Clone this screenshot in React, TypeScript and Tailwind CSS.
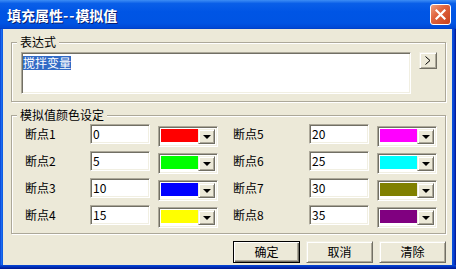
const raised =
  "border border-t-[#f1efe2] border-l-[#f1efe2] border-r-[#716f64] border-b-[#716f64] shadow-[inset_1px_1px_0_#fff,inset_-1px_-1px_0_#aca899] bg-[#ece9d8]";
const sunken =
  "border border-t-[#aca899] border-l-[#aca899] border-b-white border-r-white shadow-[inset_1px_1px_0_#716f64,inset_-1px_-1px_0_#f1efe2] bg-white";
const etched =
  "relative border border-[#aca899] shadow-[inset_1px_1px_0_#fff,1px_1px_0_#fff]";

type Point = { name: string; value: string; color: string };

const left: Point[] = [
  { name: "断点1", value: "0", color: "#ff0000" },
  { name: "断点2", value: "5", color: "#00ff00" },
  { name: "断点3", value: "10", color: "#0000ff" },
  { name: "断点4", value: "15", color: "#ffff00" },
];
const right: Point[] = [
  { name: "断点5", value: "20", color: "#ff00ff" },
  { name: "断点6", value: "25", color: "#00ffff" },
  { name: "断点7", value: "30", color: "#808000" },
  { name: "断点8", value: "35", color: "#800080" },
];

function ColorCombo({ color }: { color: string }) {
  return (
    <div className={`mt-[2px] flex h-[21px] w-[60px] p-[2px] ${sunken}`}>
      <div className="flex-1 pb-[2px]">
        <div className="h-full w-full" style={{ background: color }} />
      </div>
      <div className={`flex w-[17px] items-center justify-center ${raised}`}>
        <div className="mt-[1px] h-0 w-0 border-x-[4px] border-t-[4px] border-x-transparent border-t-black" />
      </div>
    </div>
  );
}

function Row({ p, labelW }: { p: Point; labelW: string }) {
  return (
    <div className="flex h-[20px] items-start">
      <div className={`flex h-[20px] items-center ${labelW}`}>{p.name}</div>
      <div className={`flex h-[20px] w-[60px] items-center pl-[2px] ${sunken}`}>{p.value}</div>
      <div className="w-[8px]" />
      <ColorCombo color={p.color} />
    </div>
  );
}

function Button({ label, primary = false }: { label: string; primary?: boolean }) {
  const cls = primary
    ? "border border-black bg-[#ece9d8] shadow-[inset_1px_1px_0_#fff,inset_-1px_-1px_0_#716f64,inset_-2px_-2px_0_#aca899]"
    : raised;
  return (
    <div className={`flex h-[22px] w-[67px] items-center justify-center text-[12px] ${cls}`}>{label}</div>
  );
}

export default function App() {
  return (
    <div className="flex h-[269px] w-[456px] flex-col bg-[#0054e3] font-['Noto_Sans_CJK_SC',sans-serif] text-[12px] text-black">
      {/* title bar */}
      <div className="flex h-[29px] items-center bg-[linear-gradient(to_bottom,#3d8df5_0%,#0a5fe8_12%,#0055e5_40%,#0054e3_80%,#0049d6_95%,#003ec4_100%)] pl-[7px] pr-[5px]">
        <div className="flex-1 text-[14px] font-bold leading-none text-white [text-shadow:1px_1px_0_#0a1e70]">
          填充属性<span className="tracking-[1px]">--</span>模拟值
        </div>
        <div className="flex h-[21px] w-[21px] items-center justify-center rounded-[3px] border border-white bg-[linear-gradient(135deg,#f0a080_0%,#e0643e_40%,#c8401c_100%)]">
          <svg width="11" height="11" viewBox="0 0 11 11">
            <path d="M1.5 1.5 L9.5 9.5 M9.5 1.5 L1.5 9.5" stroke="#fff" strokeWidth="2.2" strokeLinecap="square" />
          </svg>
        </div>
      </div>

      <div className="flex min-h-0 flex-1">
        <div className="w-[3px] bg-[linear-gradient(to_right,#0a3fd0,#1a6cf0,#0855dd)]" />
        <div className="flex flex-1 flex-col bg-[#ece9d8] pl-[8px] pr-[6px]">
          {/* 表达式 */}
          <div className={`mt-[13px] flex h-[60px] items-start gap-[8px] pl-[9px] pt-[9px] ${etched}`}>
            <div className="absolute left-[5px] top-[-9px] bg-[#ece9d8] px-[3px] leading-[16px]">表达式</div>
            <div className={`h-[42px] w-[390px] pl-[1px] pt-[1px] ${sunken}`}>
              <span className="inline-block bg-[#316ac5] leading-[14px] text-white">搅拌变量</span>
            </div>
            <div className={`flex h-[17px] w-[18px] items-center justify-center ${raised}`}>
              <svg width="6" height="9" viewBox="0 0 6 9">
                <path d="M0.5 0.5 L5 4.5 L0.5 8.5" fill="none" stroke="#000" strokeWidth="1" />
              </svg>
            </div>
          </div>

          {/* 模拟值颜色设定 */}
          <div className={`mt-[13px] flex h-[119px] pl-[13px] pt-[8px] ${etched}`}>
            <div className="absolute left-[5px] top-[-9px] bg-[#ece9d8] px-[3px] leading-[16px]">模拟值颜色设定</div>
            <div className="flex flex-col gap-[7px]">
              {left.map((p) => (
                <Row key={p.name} p={p} labelW="w-[65px]" />
              ))}
            </div>
            <div className="w-[15px]" />
            <div className="flex flex-col gap-[7px]">
              {right.map((p) => (
                <Row key={p.name} p={p} labelW="w-[76px]" />
              ))}
            </div>
          </div>

          <div className="mt-[7px] flex justify-end gap-[6px]">
            <Button label="确定" primary />
            <Button label="取消" />
            <Button label="清除" />
          </div>
        </div>
        <div className="w-[4px] bg-[linear-gradient(to_right,#0855dd,#0a3fd0,#00138c)]" />
      </div>
      <div className="h-[4px] bg-[linear-gradient(to_bottom,#0848d8,#0030b8,#00138c)]" />
    </div>
  );
}
